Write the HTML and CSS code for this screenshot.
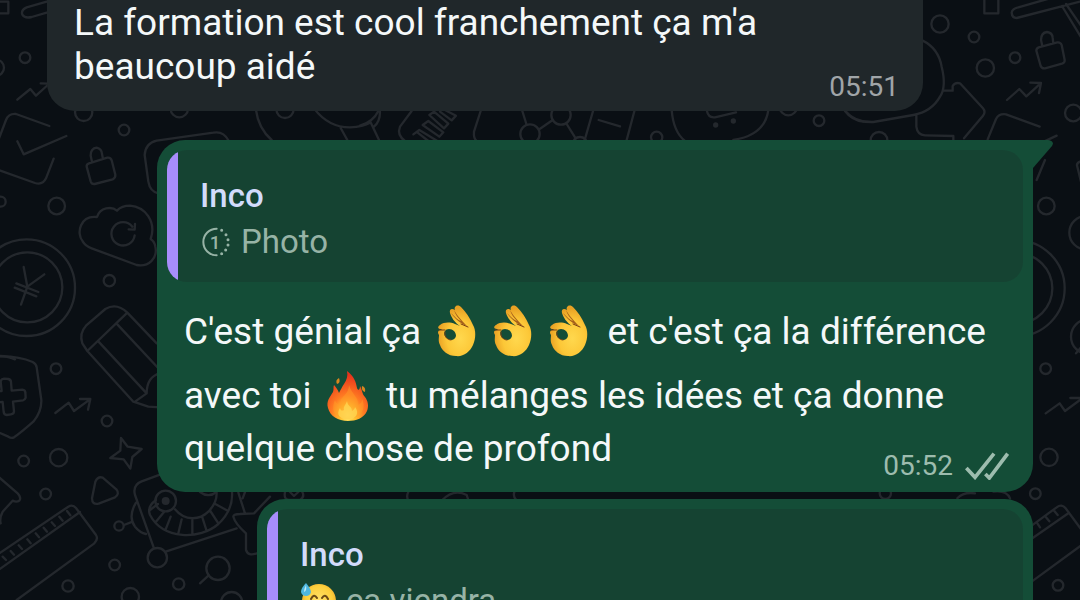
FILE: index.html
```
<!DOCTYPE html>
<html lang="fr">
<head>
  <meta charset="UTF-8">
  <meta name="viewport" content="width=device-width, initial-scale=1">
  <title>Discussion</title>
  <link rel="stylesheet" href="styles.css">
</head>
<body>
  <!-- Doodle wallpaper -->
  <svg class="wallpaper" viewBox="0 0 3240 1800" aria-hidden="true">
    <!-- left edge, top -->
    <g>
      <path d="M0 5H25V40H0M140 5L80 22Q62 30 67 44Q74 56 95 51L140 38"/>
      <circle cx="75" cy="173" r="16"/>
      <circle cx="-12" cy="203" r="24"/>
      <path d="M52 299L91 267L108 287L140 258M122 250L146 251"/>
      <circle cx="251" cy="337" r="26"/>
      <circle cx="372" cy="390" r="16"/>
      <circle cx="538" cy="326" r="26"/>
      <circle cx="855" cy="328" r="26"/>
      <path d="M768 330Q775 385 815 420M942 325Q985 382 1050 382Q1090 380 1110 368M1022 384L1042 420"/>
    </g>
    <!-- check card, lock, cloud, coin -->
    <g transform="translate(0 330)">
      <path d="M-5 90L18 30Q26 10 48 12L148 48M52 94L71 133L199 78M-5 180L105 219Q128 226 138 205L161 146"/>
      <path d="M267 160L322 143Q332 141 335 151L346 194Q347 204 338 208L284 222Q275 223 272 214L260 170Q259 163 267 160ZM276 155L272 137Q272 115 290 113Q305 116 306 132L309 147"/>
      <circle cx="2" cy="275" r="15"/>
      <circle cx="170" cy="288" r="25"/>
      <path d="M291 321C240 315 228 370 248 394Q256 408 275 415L410 465C445 472 474 445 466 410Q464 395 452 387C470 335 435 290 390 287Q365 287 351 302C335 288 300 292 291 321Z"/>
      <path d="M404 376A35 35 0 1 1 397 350M386 358L404 359L405 342"/>
      <circle cx="80" cy="533" r="145"/>
      <circle cx="82" cy="532" r="105"/>
      <path d="M71 471L82 530L133 493M82 530L63 584M49 520L115 546M44 533L109 559"/>
      <circle cx="328" cy="512" r="17"/>
      <path d="M470 700L382 608Q350 577 316 597L258 647Q237 670 247 700L262 723L382 608M262 723L400 875L445 890L480 892M295 694L440 850L405 875M352 643L480 780M480 790Q440 800 440 850"/>
      <path d="M445 215L434 135Q436 100 470 92L640 68Q670 62 685 91M445 215Q450 245 475 250M-5 738Q25 738 45 748"/>
    </g>
    <!-- shield, sparkle, ruler, film camera -->
    <g transform="translate(0 1050)">
      <path d="M-20 20Q50 15 98 36Q109 42 110 52L124 150Q125 185 100 215Q60 250 42 262Q34 266 25 260L-20 240"/>
      <path d="M2 95Q3 87 12 86L25 87Q33 89 33 96L35 122L67 119Q76 120 76 128L77 143Q75 150 69 151L39 155L42 184Q42 192 33 193L20 195Q12 194 11 186L8 156L-20 158M2 95L5 123L-20 125"/>
      <circle cx="168" cy="56" r="16"/>
      <path d="M166 189L206 158L222 183L269 149M240 147L271 147L264 179"/>
      <circle cx="321" cy="213" r="16"/>
      <path d="M363 264L383 290L425 297L397 321L391 356L371 328L331 324L361 302Z"/>
      <circle cx="176" cy="323" r="26"/>
      <circle cx="71" cy="333" r="16"/>
      <circle cx="137" cy="432" r="16"/>
      <path d="M286 395Q294 378 308 383L349 418Q360 432 345 442L296 461Q276 465 276 445Z"/>
      <path d="M-5 380L53 430Q65 442 58 452Q50 458 38 452L8 485Q-2 505 2 520"/>
      <path d="M-5 660L240 486M-5 612L205 470Q218 462 228 474L288 555Q296 568 282 581L50 750M8 620L18 630M32 603L42 614M56 586L66 597M82 568L92 580M107 550L117 562M131 533L141 545M155 517L165 528M178 500L188 512M201 483L211 496"/>
      <path d="M480 374L425 394Q397 405 405 435L462 595M497 605L710 535M408 458Q383 500 405 530Q420 548 438 552M372 525L398 515"/>
      <circle cx="357" cy="528" r="14"/>
      <circle cx="472" cy="623" r="29"/>
      <circle cx="497" cy="453" r="31"/>
      <circle class="dot" cx="497" cy="453" r="12"/>
      <path d="M468 450Q440 470 450 495C490 570 600 570 655 522Q700 480 696 425M525 478C555 515 600 510 625 485Q650 460 650 430M450 480L474 462M468 515L492 486M497 538L512 500M535 550L545 508M577 553L577 510M620 543L607 502M655 520L631 483M683 482L646 462"/>
      <path d="M600 426Q625 445 650 426M715 428L735 490M735 426L728 445M700 500Q700 492 720 492L762 490L810 440M700 500Q705 520 738 550V600Q745 620 770 610"/>
      <circle cx="344" cy="645" r="16"/>
      <circle cx="204" cy="708" r="17"/>
      <circle cx="536" cy="702" r="17"/>
      <circle cx="391" cy="740" r="26"/>
      <circle cx="654" cy="655" r="35"/>
      <path d="M626 676L600 700"/>
      <circle cx="695" cy="758" r="32"/>
    </g>
    <!-- right side, top -->
    <g transform="translate(2340 0)">
      <path d="M613 -5H655V40H613ZM900 5L710 54Q696 54 695 38Q697 26 715 22L810 -5M846 18L905 115M858 12L905 80"/>
      <circle cx="480" cy="72" r="26"/>
      <circle cx="582" cy="111" r="16"/>
      <circle cx="616" cy="204" r="26"/>
      <circle cx="705" cy="173" r="16"/>
      <path d="M776 142L832 127Q842 126 845 135L854 180Q855 188 846 191L795 205Q785 206 782 198L769 152Q769 145 776 142ZM787 138L783 120Q783 98 801 96Q817 98 818 113L820 130"/>
      <path d="M681 300L718 267L739 289L781 251M751 248L783 249L777 279"/>
      <circle cx="880" cy="339" r="25"/>
      <path d="M428 122Q475 145 485 200Q500 260 480 290Q455 335 400 345L280 366Q225 368 195 332M492 272H518V258Q525 246 540 250L609 325Q618 336 609 347L552 415M409 345V380Q412 405 435 406L520 408V420"/>
      <path d="M623 418L648 357Q657 340 678 343L779 380M760 440L830 407M770 540L795 480M900 485Q888 490 892 500L903 545"/>
      <circle cx="25" cy="320" r="26"/>
      <circle cx="117" cy="362" r="16"/>
      <circle cx="297" cy="421" r="25"/>
    </g>
    <!-- strip between the first two bubbles -->
    <g transform="translate(1080 285)">
      <path d="M0 92Q40 80 55 48M30 78L57 135M42 95Q60 80 60 50M155 48L120 95Q110 120 135 138M160 118L178 105L232 138M172 112L205 138M188 90L205 78L250 112L238 125ZM208 60L222 50L265 86L252 100ZM245 40L288 62L275 76L240 50M362 48L342 110Q340 130 350 138"/>
      <path d="M487 48L500 90M538 103L577 76M620 87L647 130M700 45L674 135M824 45L800 135M716 75L780 94M935 45Q940 110 975 138M1225 45Q1215 120 1120 135M1040 45Q1045 70 1065 67L1128 52M1455 48Q1475 75 1510 80"/>
      <circle cx="510" cy="117" r="29"/>
      <circle cx="603" cy="60" r="29"/>
      <circle cx="890" cy="127" r="17"/>
      <circle cx="660" cy="148" r="22"/>
      <circle class="dot" cx="1067" cy="90" r="8"/>
      <circle class="dot" cx="1120" cy="78" r="8"/>
    </g>
    <!-- right side, middle -->
    <g transform="translate(3000 480)">
      <circle cx="139" cy="138" r="25"/>
      <circle cx="50" cy="385" r="144"/>
      <circle cx="52" cy="385" r="105"/>
      <circle cx="258" cy="218" r="50"/>
      <circle cx="265" cy="530" r="52"/>
      <path d="M228 580L245 560"/>
      <circle cx="137" cy="626" r="16"/>
      <path d="M137 760L179 730L195 753L240 720M211 714L242 714"/>
    </g>
    <!-- right side, bottom -->
    <g transform="translate(2580 1290)">
      <circle cx="567" cy="82" r="26"/>
      <circle cx="526" cy="191" r="16"/>
      <circle cx="594" cy="466" r="16"/>
      <path d="M515 287L590 232Q605 220 617 235L665 300M515 326L625 250M515 455L665 345M532 280L540 292M558 262L568 274M583 243L593 255"/>
      <circle cx="76" cy="190" r="17"/>
      <path d="M292 205Q310 185 345 190M400 185Q440 180 450 205"/>
    </g>
    <!-- strip between the last two bubbles -->
    <g transform="translate(750 1440)">
      <path d="M105 36Q100 60 120 60H150Q165 50 157 36M120 36L132 48L145 36M475 36Q468 48 475 62M575 62Q610 25 650 45L655 60M793 36Q788 50 800 62"/>
    </g>
  </svg>

  <!-- Shared emoji artwork -->
  <svg class="defs" aria-hidden="true">
    <defs>
      <radialGradient id="skin" cx="60%" cy="65%" r="60%">
        <stop offset="0" stop-color="#ffd84e"/>
        <stop offset=".6" stop-color="#fcc737"/>
        <stop offset="1" stop-color="#e9a124"/>
      </radialGradient>
      <radialGradient id="flame" cx="50%" cy="88%" r="80%">
        <stop offset="0" stop-color="#fff176"/>
        <stop offset=".25" stop-color="#ffc02e"/>
        <stop offset=".5" stop-color="#ff7b22"/>
        <stop offset="1" stop-color="#e8331c"/>
      </radialGradient>
      <radialGradient id="face" cx="50%" cy="45%" r="55%">
        <stop offset="0" stop-color="#ffe067"/>
        <stop offset=".7" stop-color="#fdd03c"/>
        <stop offset="1" stop-color="#eda92b"/>
      </radialGradient>
      <symbol id="ok-hand" viewBox="0 0 56 64">
        <path fill="url(#skin)" fill-rule="evenodd" d="M26 7C28 6 30 7 31 8C36 13 40 19 43 26C46 31 46 39 43 46C40 53 33 58 26 57C18 57 12 52 10 46C8 42 9 39 9 36C7 33 8 31 12 31L11 30C8 30 7 28 10 26C14 23 20 23 25 25L30 27C25 24 21 18 20 14C19 10 22 9 25 11C24 9 25 8 26 7ZM15 32C13 34 15 39 18 40C21 42 25 41 26 37C26 33 23 30 19 30Q16 30 15 32Z"/>
        <path fill="#a5601b" d="M24 11C26 15 31 21 37 27C31 25 25 20 21 14C25 18 28 21 31 22C28 19 25 15 24 11Z"/>
        <path fill="none" stroke="#7a3f13" stroke-width="1" stroke-linecap="round" d="M9 31H15M15 33C14 37 17 41 21 41M31 25L38 28"/>
      </symbol>
      <symbol id="fire" viewBox="0 0 56 64">
        <path fill="url(#flame)" d="M26 8C33 13 35 19 36 25C37 28 39 27 39 23C41 26 41 31 44 34C47 38 48 43 46 48C43 55 35 58 27 58C17 58 9 53 7 45C5 38 9 34 12 29C13 26 12 24 13 22C15 24 17 27 18 30C20 26 21 24 23 21C26 17 27 12 26 8Z"/>
        <path fill="#ff9c27" opacity=".5" d="M28 22C31 32 38 34 37 42C40 41 41 38 41 36C46 46 39 56 27 56C15 56 9 48 14 37C15 40 17 42 19 41C19 33 28 32 28 22Z"/>
        <path fill="#ffdb55" opacity=".7" d="M26 38C27 44 31 43 31 48C33 47 34 45 34 44C39 50 35 56 27 57C18 56 15 51 19 45C20 48 21 48 23 47C22 43 25 42 26 38Z"/>
        <path fill="#d8861f" d="M18 15Q14 17 16 21Q20 20 18 15ZM41 23Q45 24 44 29Q40 28 41 23Z"/>
      </symbol>
      <symbol id="sweat" viewBox="0 0 38 38">
        <circle cx="19" cy="19" r="17" fill="url(#face)"/>
        <path fill="none" stroke="#6b4a16" stroke-width="2" stroke-linecap="round" d="M11 17Q14 11 17 16M22 16Q25 11 28 17"/>
        <path fill="#6b3a1a" d="M9 22H29Q27 31 19 31T9 22Z"/>
        <path fill="#4fb7df" d="M6 1Q11 7 11 10Q10 14 6 14T1 10Q1 6 6 1Z"/>
        <path fill="#bdeaf8" d="M6 3Q4 7 4 10Q7 9 6 3Z"/>
      </symbol>
    </defs>
  </svg>

  <main class="chat">
    <article class="bubble bubble-in">
      <p class="text">La formation est cool franchement ça m'a beaucoup aidé</p>
      <div class="meta"><time>05:51</time></div>
    </article>

    <article class="bubble bubble-out has-tail">
      <svg class="tail" viewBox="0 0 20 28" aria-hidden="true">
        <path d="M0 0H15Q22 1 19 6L0 28Z"/>
      </svg>
      <blockquote class="quote">
        <cite>Inco</cite>
        <p>
          <svg class="once" viewBox="0 0 90 90" aria-hidden="true">
            <path d="M50 5A40 40 0 0 0 50 85"/>
            <path class="dots" d="M65 10L65 10M78 23L78 23M84 38L84 38M84 54L84 54M77 69L77 69M65 80L65 80"/>
            <text x="45" y="65">1</text>
          </svg>
          <span>Photo</span>
        </p>
      </blockquote>
      <p class="text">C'est génial ça <svg class="emoji" role="img" aria-label="👌"><use href="#ok-hand"/></svg><svg class="emoji" role="img" aria-label="👌"><use href="#ok-hand"/></svg><svg class="emoji" role="img" aria-label="👌"><use href="#ok-hand"/></svg> et c'est ça la différence avec toi <svg class="emoji" role="img" aria-label="🔥"><use href="#fire"/></svg> tu mélanges les idées et ça donne quelque chose de profond</p>
      <div class="meta">
        <time>05:52</time>
        <svg class="ticks" viewBox="0 0 132 84" role="img" aria-label="Distribué">
          <path d="M4 48L30 76L87 5M61 66L73 78L128 5"/>
        </svg>
      </div>
    </article>

    <article class="bubble bubble-out short">
      <blockquote class="quote">
        <cite>Inco</cite>
        <p>
          <svg class="face" role="img" aria-label="😅"><use href="#sweat"/></svg>
          <span>ça viendra</span>
        </p>
      </blockquote>
    </article>
  </main>
</body>
</html>
```
FILE: styles.css
```
* {
  box-sizing: border-box;
}

body {
  margin: 0;
  height: 100vh;
  overflow: hidden;
  position: relative;
  background-color: #0a0f14;
  color: #f4f8f9;
  font-family: Roboto, "Liberation Sans", sans-serif;
}

p,
blockquote {
  margin: 0;
}

.wallpaper {
  position: absolute;
  top: 0;
  left: 0;
  width: 1080px;
  height: 600px;
  fill: none;
  stroke: #24282d;
  stroke-width: 7;
  stroke-linecap: round;
  stroke-linejoin: round;
}

.wallpaper .dot {
  fill: #24282d;
  stroke: none;
}

.defs {
  position: absolute;
  width: 0;
  height: 0;
}

.chat {
  position: relative;
  display: flex;
  flex-direction: column;
  height: 100vh;
  overflow: hidden;
  padding: 0 47px;
}

.bubble {
  position: relative;
  display: flex;
  flex: none;
  flex-direction: column;
  border-radius: 28px;
}

.bubble-in {
  margin-right: 110px;
  padding: 1px 0 8px;
  border-top-left-radius: 0;
  border-top-right-radius: 0;
  background-color: #20272a;
}

.bubble-out {
  margin-left: 110px;
  padding: 10px 0;
  background-color: #144d37;
}

.has-tail {
  margin-top: 29px;
  margin-bottom: 7px;
  border-top-right-radius: 0;
}

.short {
  margin-left: 210px;
}

.tail {
  position: absolute;
  top: 0;
  left: 100%;
  width: 20px;
  height: 28px;
  fill: #144d37;
}

.text {
  padding: 0 24px 0 27px;
  font-size: 37px;
  line-height: 44px;
}

.quote + .text {
  padding-top: 17px;
}

.emoji {
  width: 56px;
  height: 64px;
  vertical-align: -19px;
}

/* time and ticks tuck up beside the last line */
.meta {
  display: flex;
  align-items: center;
  align-self: flex-end;
  gap: 12px;
  margin-top: -18px;
  padding-right: 24px;
  color: #a0a5a8;
  font-size: 28px;
  line-height: 32px;
}

.bubble-out .meta {
  margin-top: -21px;
  color: #9dbcae;
}

.ticks {
  width: 44px;
  height: 28px;
  fill: none;
  stroke: #9dbcae;
  stroke-width: 11;
}

/* quoted message, the sender's colour runs down its left side */
.quote {
  margin: 0 10px;
  padding: 23px 22px 17px 33px;
  border-radius: 20px;
  background: linear-gradient(to right, #a78dfb 11px, #154332 11px);
}

.quote cite {
  display: block;
  color: #d2dbfb;
  font-size: 33px;
  font-style: normal;
  font-weight: 500;
  line-height: 46px;
}

.quote p {
  display: flex;
  align-items: center;
  gap: 8px;
  color: #97b3a6;
  font-size: 33px;
  line-height: 46px;
}

.once {
  width: 30px;
  height: 30px;
  margin-right: 3px;
  fill: none;
  stroke: #97b3a6;
  stroke-width: 6;
  stroke-linecap: round;
}

.once .dots {
  stroke-width: 9;
}

.once text {
  fill: #97b3a6;
  stroke: none;
  font-size: 56px;
  font-weight: 500;
  text-anchor: middle;
}

.face {
  width: 38px;
  height: 38px;
}
```
